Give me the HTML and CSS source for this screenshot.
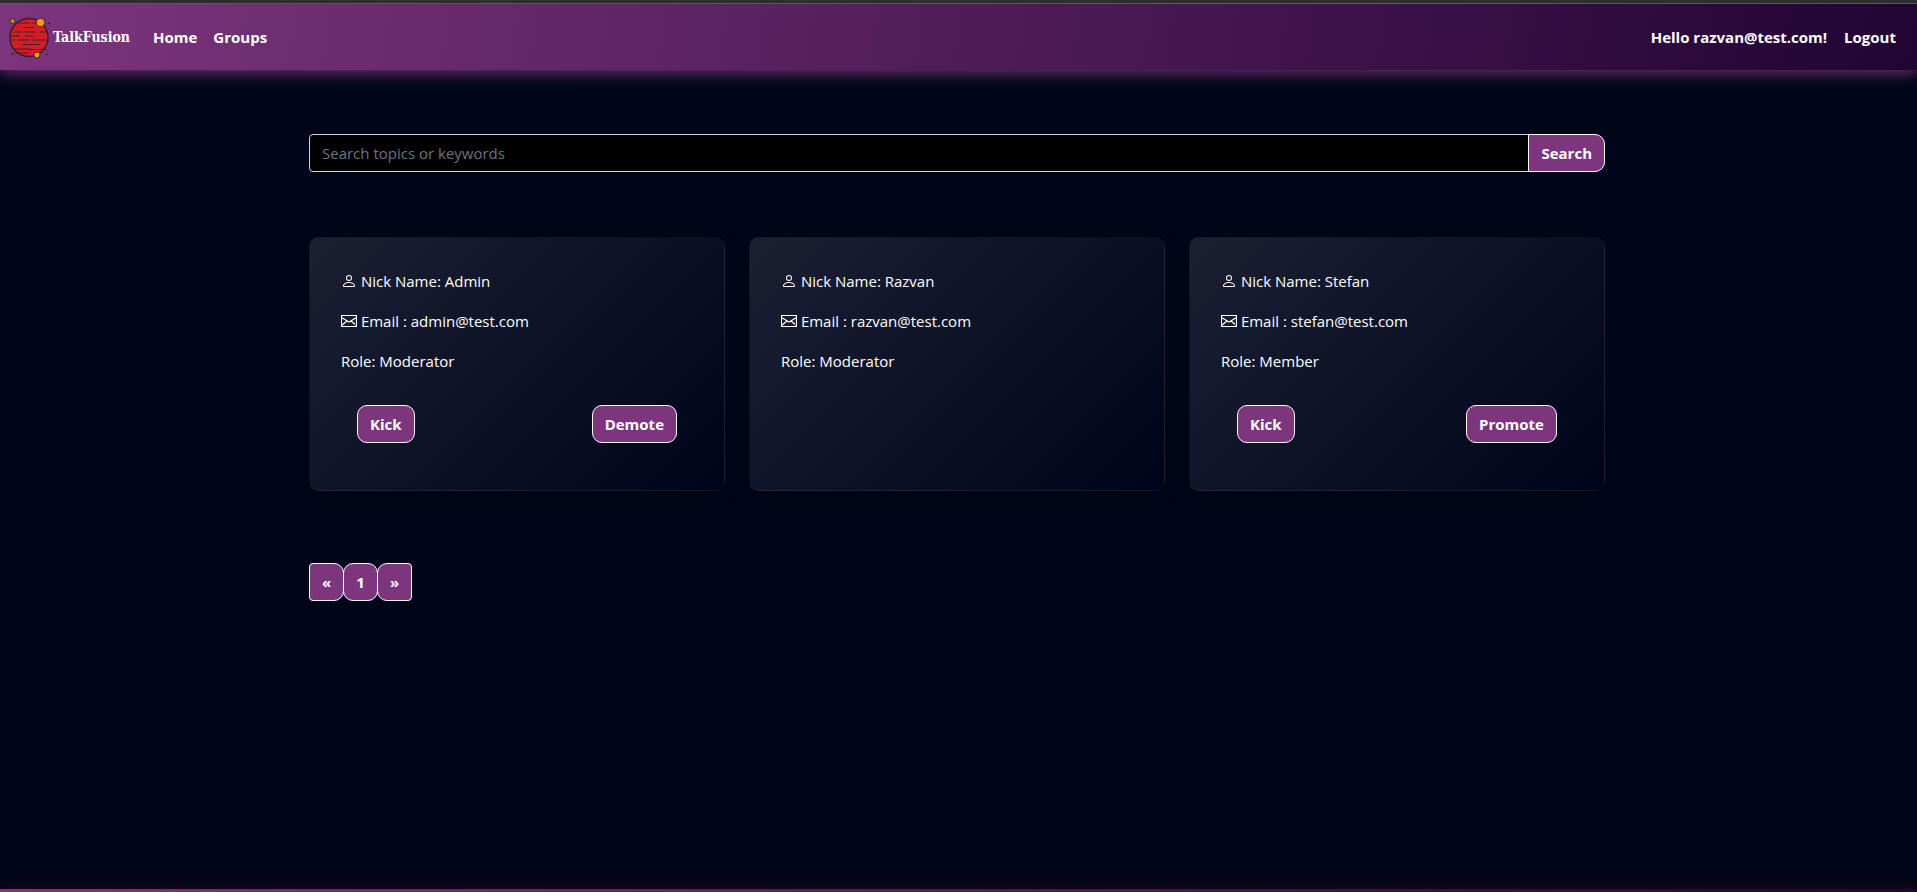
FILE: index.html
```html
<!DOCTYPE html>
<html lang="en">
<head>
<meta charset="utf-8">
<title>TalkFusion</title>
<link rel="stylesheet" href="styles.css">
</head>
<body>
<svg class="sprite" aria-hidden="true">
  <symbol id="person" viewBox="0 0 16 16"><path d="M8 8a3 3 0 1 0 0-6 3 3 0 0 0 0 6Zm2-3a2 2 0 1 1-4 0 2 2 0 0 1 4 0Zm4 8c0 1-1 1-1 1H3s-1 0-1-1 1-4 6-4 6 3 6 4Zm-1-.004c-.001-.246-.154-.986-.832-1.664C11.516 10.68 10.289 10 8 10c-2.29 0-3.516.68-4.168 1.332-.678.678-.83 1.418-.832 1.664h10Z"/></symbol>
  <symbol id="envelope" viewBox="0 0 16 16"><path d="M.5 2.500h15v11H.5ZM.5 4.500 8 9l7.500-4.500M.5 12.500l5.500-4.500M15.500 12.500 10 8" fill="none" stroke="currentColor" stroke-width="1.200"/></symbol>
</svg>
<header class="navbar">
  <a class="brand" href="#">
    <svg class="logo" viewBox="0 0 44 44" aria-hidden="true">
      <circle cx="21" cy="22.500" r="19" fill="#d21f26" stroke="#3a1b2b" stroke-width="1.400"/>
      <path d="M9 8h12M25 8h3M16 12.500h9M6 17h8M17 17h10M32 17h7M2 21h9M17 21h8M2 25h5M10 25h11M25 25h15M15 29.500h16M5 34h17M21 34.500h17M8 38h12" stroke="#4a1a26" stroke-width="1.200" stroke-linecap="round"/>
      <circle cx="32.500" cy="7.500" r="4.200" fill="#f7931e" stroke="#4a2a2b"/>
      <circle cx="29" cy="40" r="3" fill="#f7931e" stroke="#4a2a2b"/>
      <path d="M4 3l1.200 1.600 2-.3-.9 1.900.9 1.800-2-.3L4 9.200l-.6-2L1.400 6.300l1.800-1Z" fill="#f7931e" stroke="#4a2a2b" stroke-width=".8"/>
      <circle cx="41" cy="8" r="1" fill="#3a1b3b"/><circle cx="4.500" cy="39" r="1" fill="#3a1b3b"/><circle cx="38.500" cy="39.500" r="1" fill="#3a1b3b"/>
    </svg>
    <span class="brand-name">TalkFusion</span>
  </a>
  <nav class="links">
    <a href="#">Home</a>
    <a href="#">Groups</a>
  </nav>
  <div class="account">
    <span>Hello razvan@test.com!</span>
    <a href="#">Logout</a>
  </div>
</header>
<main class="page">
  <div class="container">
    <form class="search">
      <input class="search-input" type="search" placeholder="Search topics or keywords" aria-label="Search topics or keywords">
      <button class="btn search-btn" type="button">Search</button>
    </form>
    <section class="cards">
      <article class="card">
        <p><svg class="icon"><use href="#person"/></svg> Nick Name: Admin</p>
        <p><svg class="icon"><use href="#envelope"/></svg> Email : admin@test.com</p>
        <p>Role: Moderator</p>
        <div class="actions"><button class="btn" type="button">Kick</button><button class="btn" type="button">Demote</button></div>
      </article>
      <article class="card">
        <p><svg class="icon"><use href="#person"/></svg> Nick Name: Razvan</p>
        <p><svg class="icon"><use href="#envelope"/></svg> Email : razvan@test.com</p>
        <p>Role: Moderator</p>
      </article>
      <article class="card">
        <p><svg class="icon"><use href="#person"/></svg> Nick Name: Stefan</p>
        <p><svg class="icon"><use href="#envelope"/></svg> Email : stefan@test.com</p>
        <p>Role: Member</p>
        <div class="actions"><button class="btn" type="button">Kick</button><button class="btn" type="button">Promote</button></div>
      </article>
    </section>
    <nav class="pagination" aria-label="Pages">
      <a class="btn" href="#">«</a>
      <a class="btn" href="#">1</a>
      <a class="btn" href="#">»</a>
    </nav>
  </div>
</main>
<footer class="footer"></footer>
</body>
</html>
```
FILE: styles.css
```css
* { box-sizing: border-box; }

body {
  margin: 0;
  min-height: 100vh;
  display: flex;
  flex-direction: column;
  background: #00061a;
  color: #fff;
  font: 500 15px/24px "Open Sans", "Noto Sans", sans-serif;
  border-top: 3px solid #2e2e2e;
}

a { color: inherit; text-decoration: none; }

.sprite { position: absolute; width: 0; height: 0; }

.navbar {
  display: flex;
  align-items: center;
  height: 67px;
  padding: 0 21px 0 8px;
  border-top: 1px solid #5c5a5c;
  background: linear-gradient(100deg, #7d357d, #220433);
  box-shadow: 0 2px 15px #7d357d;
  color: #fff;
  font-weight: 700;
}

.brand { display: flex; align-items: center; gap: 1px; }
.logo { width: 44px; height: 44px; }
.brand-name { font: 700 14px/24px "DejaVu Serif Condensed", "DejaVu Serif", serif; }
.links { display: flex; gap: 16px; margin-left: 23px; }
.account { display: flex; gap: 17px; margin-left: auto; }

.page { flex: 1; padding: 64px 3px 64px 0; }
.container { max-width: 1320px; margin: 0 auto; padding: 0 12px; }

.search { display: flex; margin-bottom: 65px; }
.search-input {
  flex: 1;
  min-width: 0;
  height: 38px;
  padding: 6px 12px;
  border: 1px solid #ced4da;
  border-radius: 4px 0 0 4px;
  background: #000;
  color: #fff;
  font: inherit;
  font-weight: 400;
}
.search-input::placeholder { color: #6c757d; opacity: 1; }

.btn {
  padding: 6px 12px;
  border: 1px solid #fff;
  border-radius: 10px;
  background: #7d357d;
  color: #fff;
  font: inherit;
  font-weight: 700;
  text-align: center;
}
.search-btn { margin-left: -1px; border-radius: 0 10px 10px 0; }

.cards {
  display: grid;
  grid-template-columns: repeat(3, 1fr);
  gap: 24px;
  margin-bottom: 72px;
}
.card {
  padding: 31px;
  border: 1px solid rgba(255, 255, 255, 0.04);
  border-radius: 10px;
  background: linear-gradient(135deg, rgba(255, 255, 255, 0.11), rgba(255, 255, 255, 0)), #00041a;
  box-shadow: 0 4px 20px rgba(0, 0, 0, 0.37);
}
.card p { margin: 0 0 16px; }
.icon { width: 16px; height: 16px; fill: currentColor; vertical-align: -2px; }
.actions { display: flex; justify-content: space-between; padding: 16px; }

.pagination { display: flex; }
.pagination .btn { width: 35px; padding: 6px 0; }
.pagination .btn + .btn { margin-left: -1px; }
.pagination .btn:first-child { border-radius: 4px 10px 10px 4px; }
.pagination .btn:last-child { border-radius: 10px 4px 4px 10px; }

.footer {
  height: 3px;
  background: linear-gradient(90deg, #7d357d, #220433);
  box-shadow: 0 0 15px rgba(120, 20, 20, 0.8);
}
```
